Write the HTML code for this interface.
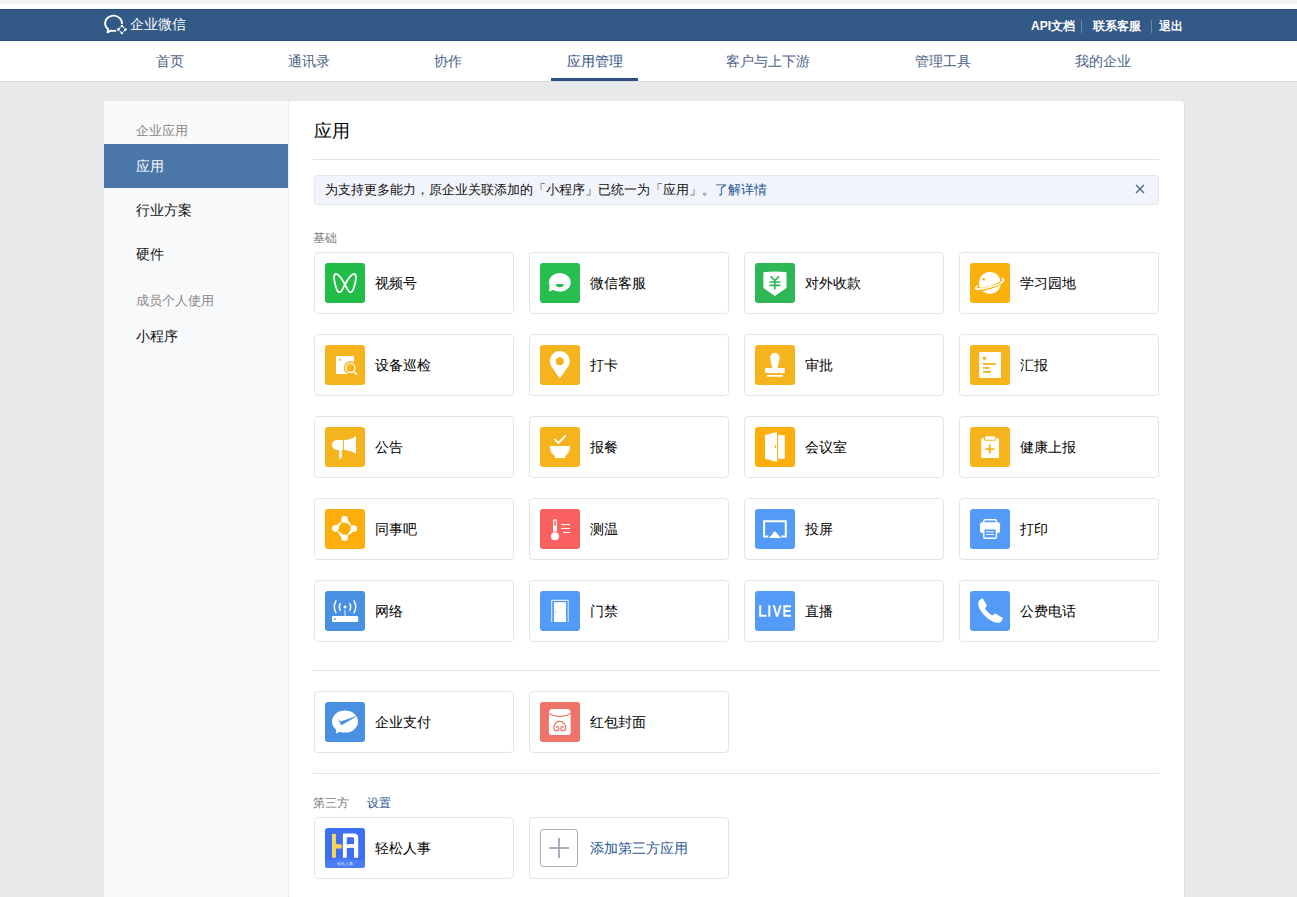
<!DOCTYPE html>
<html><head><meta charset="utf-8">
<style>
*{box-sizing:border-box;margin:0;padding:0}
html,body{width:1297px;height:897px;overflow:hidden}
body{background:#e8e9eb;font-family:"Liberation Sans",sans-serif;position:relative;color:#222}
.abs{position:absolute}
#strip{left:0;top:0;width:1297px;height:4px;background:#f1f2f4}
#strip2{left:0;top:4px;width:1297px;height:5px;background:#fff}
#hdr{left:0;top:9px;width:1297px;height:32px;background:#335986;border-top:1px solid #264c7d;border-bottom:1px solid #2c5282}
#nav{left:0;top:41px;width:1297px;height:41px;background:#fff;border-bottom:1px solid #d9dadc}
.logo{left:130px;top:15px;font-size:14px;color:#fff;line-height:18px}
.hlink{top:18px;font-size:12px;color:#fff;line-height:16px;font-weight:bold}
.hsep{top:20px;width:1px;height:13px;background:#6d87a8}
.nv{top:53px;font-size:14px;line-height:16px;color:#4b6287;white-space:nowrap}
.nv.on{color:#2c4f7f}
#uline{left:551px;top:78px;width:87px;height:3px;background:#2c5282}
#panel{left:104px;top:101px;width:1080px;height:820px;background:#fff;border-radius:3px;box-shadow:1px 0 0 rgba(0,0,0,.035)}
#side{left:104px;top:101px;width:185px;height:820px;background:#f8f9fb;border-right:1px dotted #dfe3ea;border-radius:3px 0 0 0}
.sl{left:136px;font-size:13px;color:#888;line-height:16px}
.si{left:136px;font-size:14px;color:#111;line-height:16px}
#act{left:104px;top:144px;width:184px;height:44px;background:#4a76a8}
.title{left:314px;top:121px;font-size:18px;line-height:20px;color:#000}
.hr{left:313px;width:846px;height:1px;background:#e1e4e8}
#notice{left:314px;top:175px;width:845px;height:30px;background:#f1f4fa;border:1px solid #e1e6f0;border-radius:3px}
#notice .t{position:absolute;left:10px;top:6px;font-size:13px;line-height:16px;color:#111;white-space:nowrap}
#notice a{color:#1e5494;text-decoration:none}
.lbl{font-size:12px;color:#787878;line-height:14px}
.card{position:absolute;width:200px;height:62px;border:1px solid #e3e5ea;border-radius:4px;background:#fff}
.card .ic{position:absolute;left:10px;top:10px;width:40px;height:40px;border-radius:3px;overflow:hidden}
.card .ic svg{display:block;width:40px;height:40px}
.card .addb{position:absolute;left:10px;top:11px;width:38px;height:38px;border:1px solid #a7b1c0;border-radius:3px}
.card .addb svg{position:absolute;left:-1px;top:-1px}
.card .nm{position:absolute;left:60px;top:22px;font-size:14px;line-height:16px;color:#000;white-space:nowrap}
</style></head><body>
<div class="abs" id="strip"></div>
<div class="abs" id="strip2"></div>
<div class="abs" id="hdr"></div>
<svg class="abs" style="left:100px;top:12px" width="30" height="26" viewBox="100 12 30 26"><path d="M121.9,24 A8.4,7.6 0 1 0 108.1,29.1 L107.6,32.3 L111,30.6 Q113.5,31.1 116.2,30.8" fill="none" stroke="#fff" stroke-width="1.9" stroke-linejoin="round"/><path d="M122.43,25.37 Q124.11,27.29 124.97,28.97 Q123.54,27.86 121.37,26.43 Z" fill="#fff"/><circle cx="121.90" cy="25.90" r="1.25" fill="#fff"/><path d="M126.03,30.03 Q124.11,31.71 122.43,32.57 Q123.54,31.14 124.97,28.97 Z" fill="#fff"/><circle cx="125.50" cy="29.50" r="1.25" fill="#fff"/><path d="M121.37,33.63 Q119.69,31.71 118.83,30.03 Q120.26,31.14 122.43,32.57 Z" fill="#fff"/><circle cx="121.90" cy="33.10" r="1.25" fill="#fff"/><path d="M117.77,28.97 Q119.69,27.29 121.37,26.43 Q120.26,27.86 118.83,30.03 Z" fill="#fff"/><circle cx="118.30" cy="29.50" r="1.25" fill="#fff"/></svg>
<div class="abs logo">企业微信</div>
<div class="abs hlink" style="left:1031px">API文档</div>
<div class="abs hsep" style="left:1081px"></div>
<div class="abs hlink" style="left:1093px">联系客服</div>
<div class="abs hsep" style="left:1151px"></div>
<div class="abs hlink" style="left:1159px">退出</div>

<div class="abs" id="nav"></div>
<div class="abs nv" style="left:156px">首页</div>
<div class="abs nv" style="left:288px">通讯录</div>
<div class="abs nv" style="left:434px">协作</div>
<div class="abs nv on" style="left:567px">应用管理</div>
<div class="abs nv" style="left:726px">客户与上下游</div>
<div class="abs nv" style="left:915px">管理工具</div>
<div class="abs nv" style="left:1075px">我的企业</div>
<div class="abs" id="uline"></div>

<div class="abs" id="panel"></div>
<div class="abs" id="side"></div>
<div class="abs sl" style="top:123px">企业应用</div>
<div class="abs" id="act"></div>
<div class="abs si" style="top:158px;color:#fff">应用</div>
<div class="abs si" style="top:202px">行业方案</div>
<div class="abs si" style="top:246px">硬件</div>
<div class="abs sl" style="top:293px">成员个人使用</div>
<div class="abs si" style="top:328px">小程序</div>

<div class="abs title">应用</div>
<div class="abs hr" style="top:159px"></div>
<div class="abs" id="notice"><div class="t">为支持更多能力，原企业关联添加的「小程序」已统一为「应用」。<a>了解详情</a></div><svg style="position:absolute;left:820px;top:8px" width="10" height="10" viewBox="0 0 10 10"><path d="M1,1 L9,9 M9,1 L1,9" stroke="#4d6890" stroke-width="1.4"/></svg></div>
<div class="abs lbl" style="left:313px;top:231px">基础</div>

<div class="card" style="left:314px;top:252px"><div class="ic" style="background:#21bd48"><svg viewBox="0 0 40 40"><path d="M20,21.5 C17.5,17 13,10.5 10.6,11 C8.2,11.5 8.8,19 11.8,26.5 C13.2,30.2 15.6,30.2 17.6,26.2 Z M20,21.5 C22.5,17 27,10.5 29.4,11 C31.8,11.5 31.2,19 28.2,26.5 C26.8,30.2 24.4,30.2 22.4,26.2 Z" fill="none" stroke="#fff" stroke-width="1.8" stroke-linejoin="round"/></svg></div><div class="nm">视频号</div></div>
<div class="card" style="left:529px;top:252px"><div class="ic" style="background:#26bf4f"><svg viewBox="0 0 40 40"><ellipse cx="19.8" cy="19.4" rx="10.9" ry="9.4" fill="#fff"/><path d="M9.6,23 L9,28.6 L14.5,26.5 Z" fill="#fff"/><path d="M15.8,21 H23.8 A4,3.2 0 0 1 15.8,21 Z" fill="#26bf4f"/></svg></div><div class="nm">微信客服</div></div>
<div class="card" style="left:744px;top:252px"><div class="ic" style="background:#2db757"><svg viewBox="0 0 40 40"><path d="M8.4,9.3 Q20,7.6 31.5,9.3 V25 L19.8,32.9 L8.4,25 Z" fill="#fff"/><path d="M15.6,13.4 L19.8,17.5 L24,13.4 M14.3,19 H25.4 M14.3,22.4 H25.4 M19.8,17.5 V26.6" fill="none" stroke="#2db757" stroke-width="1.7"/></svg></div><div class="nm">对外收款</div></div>
<div class="card" style="left:959px;top:252px"><div class="ic" style="background:#fbb00c"><svg viewBox="0 0 40 40"><circle cx="19.9" cy="19.9" r="10.9" fill="#fff"/><circle cx="13.7" cy="16.2" r="1.3" fill="#fbb00c"/><path d="M5.6,25 C3,27 10,27.5 20,24.5 C30,21.5 35.5,17.5 33.2,16" fill="none" stroke="#fbb00c" stroke-width="3.2"/><path d="M7.5,23.2 C3,25.8 6,27.8 20,24 C34,20 35,17 32.6,15.6" fill="none" stroke="#fff" stroke-width="1.7" stroke-linecap="round"/></svg></div><div class="nm">学习园地</div></div>
<div class="card" style="left:314px;top:334px"><div class="ic" style="background:#f5b41d"><svg viewBox="0 0 40 40"><rect x="11" y="11" width="18" height="18" rx="0.8" fill="#fff"/><circle cx="14.8" cy="14.8" r="1.1" fill="#f5b41d"/><circle cx="25.4" cy="22.9" r="6.6" fill="#f5b41d"/><circle cx="25.4" cy="22.9" r="4.5" fill="none" stroke="#fff" stroke-width="1.3"/><path d="M28.6,26.4 L31.8,29.6" stroke="#fff" stroke-width="1.4" stroke-linecap="round"/></svg></div><div class="nm">设备巡检</div></div>
<div class="card" style="left:529px;top:334px"><div class="ic" style="background:#f5b41d"><svg viewBox="0 0 40 40"><path d="M19.8,33.5 L11.2,21.2 A10,10 0 1 1 28.4,21.2 Z" fill="#fff"/><circle cx="19.8" cy="16.2" r="4" fill="#f5b41d"/></svg></div><div class="nm">打卡</div></div>
<div class="card" style="left:744px;top:334px"><div class="ic" style="background:#f5b41d"><svg viewBox="0 0 40 40"><path d="M17.3,23.2 L15.3,14.5 A4.8,5.2 0 1 1 24.5,14.5 L22.6,23.2 Z" fill="#fff"/><rect x="10" y="23" width="19.8" height="4.9" rx="0.8" fill="#fff"/><rect x="12" y="29.9" width="15.9" height="1.9" rx="0.5" fill="#fff"/></svg></div><div class="nm">审批</div></div>
<div class="card" style="left:959px;top:334px"><div class="ic" style="background:#f5b41d"><svg viewBox="0 0 40 40"><rect x="9.2" y="7" width="21.8" height="25.9" rx="1.2" fill="#fff"/><circle cx="14.4" cy="13.3" r="1.8" fill="#f5b41d"/><rect x="13" y="18.1" width="12.9" height="1.8" fill="#f5b41d"/><rect x="13" y="22" width="6.9" height="1.8" fill="#f5b41d"/><rect x="13" y="26" width="8" height="1.8" fill="#f5b41d"/></svg></div><div class="nm">汇报</div></div>
<div class="card" style="left:314px;top:416px"><div class="ic" style="background:#f5b41d"><svg viewBox="0 0 40 40"><path d="M17.9,13.1 H12 A5,4.9 0 0 0 12,22.9 H17.9 Z" fill="#fff"/><path d="M19,13.1 Q26,12.6 31,8.9 V26.8 Q26,23.3 19,22.9 Z" fill="#fff"/><path d="M14.1,22.9 H16.9 L16.7,30.6 A1.2,1.2 0 0 1 14.3,30.6 Z" fill="#fff"/></svg></div><div class="nm">公告</div></div>
<div class="card" style="left:529px;top:416px"><div class="ic" style="background:#f5b41d"><svg viewBox="0 0 40 40"><path d="M14.8,12.4 L18.4,16 L25.4,8.9" fill="none" stroke="#fff" stroke-width="1.8" stroke-linecap="round"/><path d="M9.8,19 H30.1 C30.1,24 28,27 25.1,29 V31 H15 V29 C12,27 9.8,24 9.8,19 Z" fill="#fff"/></svg></div><div class="nm">报餐</div></div>
<div class="card" style="left:744px;top:416px"><div class="ic" style="background:#fdae0b"><svg viewBox="0 0 40 40"><path d="M10,8.1 L22,5 V34.9 L10,31.8 Z" fill="#fff"/><rect x="20" y="18" width="1" height="3" fill="#fdae0b"/><rect x="23.1" y="8.1" width="6.7" height="23.7" fill="#fff"/></svg></div><div class="nm">会议室</div></div>
<div class="card" style="left:959px;top:416px"><div class="ic" style="background:#f5b41d"><svg viewBox="0 0 40 40"><rect x="11.2" y="11.2" width="17.8" height="19.8" rx="0.8" fill="#fff"/><rect x="14.2" y="8.4" width="11.6" height="5.4" rx="1.2" fill="#f5b41d"/><rect x="15.2" y="9.3" width="9.8" height="3.4" rx="0.8" fill="#fff"/><path d="M15.3,22.1 H24.4 M19.8,17.4 V26.6" stroke="#f5b41d" stroke-width="1.9"/></svg></div><div class="nm">健康上报</div></div>
<div class="card" style="left:314px;top:498px"><div class="ic" style="background:#fdae0b"><svg viewBox="0 0 40 40"><path d="M20.94,9.06 Q25.44,13.76 27.40,18.20 Q23.80,15.40 18.26,11.74 Z" fill="#fff"/><circle cx="19.60" cy="10.40" r="3.3" fill="#fff"/><path d="M30.14,20.94 Q25.44,25.44 21.00,27.40 Q23.80,23.80 27.46,18.26 Z" fill="#fff"/><circle cx="28.80" cy="19.60" r="3.3" fill="#fff"/><path d="M18.26,30.14 Q13.76,25.44 11.80,21.00 Q15.40,23.80 20.94,27.46 Z" fill="#fff"/><circle cx="19.60" cy="28.80" r="3.3" fill="#fff"/><path d="M9.06,18.26 Q13.76,13.76 18.20,11.80 Q15.40,15.40 11.74,20.94 Z" fill="#fff"/><circle cx="10.40" cy="19.60" r="3.3" fill="#fff"/></svg></div><div class="nm">同事吧</div></div>
<div class="card" style="left:529px;top:498px"><div class="ic" style="background:#fb6060"><svg viewBox="0 0 40 40"><path d="M13.1,22.5 V12 A1.95,1.95 0 0 1 17,12 V22.5 Z" fill="#fff"/><circle cx="15" cy="27.3" r="4" fill="#fff"/><rect x="14.2" y="11.3" width="1.6" height="5.4" rx="0.6" fill="#fb6060"/><rect x="21.2" y="15" width="8.9" height="1.1" fill="#fff"/><rect x="21.2" y="18.9" width="8.9" height="1.1" fill="#fff"/><rect x="23.1" y="22.9" width="7" height="1.1" fill="#fff"/></svg></div><div class="nm">测温</div></div>
<div class="card" style="left:744px;top:498px"><div class="ic" style="background:#539bf7"><svg viewBox="0 0 40 40"><path d="M13.4,27.5 H9.1 V12.2 H30.8 V27.5 H26.3" fill="none" stroke="#fff" stroke-width="2"/><path d="M14,29 L19.8,22 L26,29 Z" fill="#fff"/></svg></div><div class="nm">投屏</div></div>
<div class="card" style="left:959px;top:498px"><div class="ic" style="background:#539bf7"><svg viewBox="0 0 40 40"><rect x="13.8" y="10.7" width="12.6" height="6" rx="1" fill="none" stroke="#fff" stroke-width="1.4"/><rect x="10" y="13.2" width="20.1" height="10.8" rx="2.2" fill="#fff"/><rect x="13.8" y="19.8" width="12.6" height="9.5" rx="1" fill="#539bf7" stroke="#fff" stroke-width="1.4"/><rect x="16" y="22" width="8" height="1.6" fill="#b9d5fb"/><rect x="16" y="25" width="8" height="0.9" fill="#fff"/></svg></div><div class="nm">打印</div></div>
<div class="card" style="left:314px;top:580px"><div class="ic" style="background:#4a90e2"><svg viewBox="0 0 40 40"><circle cx="20" cy="15.9" r="1.5" fill="#fff"/><path d="M15.2,12.6 Q13.4,16 15.2,19.4 M24.8,12.6 Q26.6,16 24.8,19.4 M11,9.8 Q7.6,15.8 11,21.8 M29,9.8 Q32.4,15.8 29,21.8" fill="none" stroke="#fff" stroke-width="1.4" stroke-linecap="round"/><rect x="19.3" y="19" width="1.4" height="6" fill="#b9d5f5"/><rect x="7" y="25.1" width="26.2" height="5.9" rx="1" fill="#fff"/><rect x="9.2" y="27.3" width="1.6" height="1.6" fill="#4a90e2"/></svg></div><div class="nm">网络</div></div>
<div class="card" style="left:529px;top:580px"><div class="ic" style="background:#539bf7"><svg viewBox="0 0 40 40"><path d="M11.7,31 V9.4 H28.2 V31" fill="none" stroke="#dbe9fd" stroke-width="1.1"/><rect x="14" y="11.2" width="12" height="19.8" fill="#fff"/><circle cx="15.6" cy="21.2" r="0.6" fill="#539bf7"/></svg></div><div class="nm">门禁</div></div>
<div class="card" style="left:744px;top:580px"><div class="ic" style="background:#539bf7"><svg viewBox="0 0 40 40"><path d="M5.2,14.2 V24.7 H11.4 M14.35,14.2 V25.7 M36,15.2 H29.4 V24.7 H36 M29.4,19.9 H35.4" fill="none" stroke="#fff" stroke-width="2"/><path d="M17.7,14.2 H19.8 L22.15,22.9 L24.5,14.2 H26.6 L23.2,25.7 H21.1 Z" fill="#fff"/></svg></div><div class="nm">直播</div></div>
<div class="card" style="left:959px;top:580px"><div class="ic" style="background:#539bf7"><svg viewBox="0 0 40 40"><path d="M12.6,7.2 L16.3,13.2 C16.9,14.3 16.6,15.4 15.5,16.4 L15,17.2 C16.6,20.2 19.6,23 22.4,24.6 L23.4,23.4 C24.3,22.6 25.3,22.5 26.4,23.1 L32.8,26.9 C32.4,29.8 30.6,31.8 28.4,31.8 C20,31.8 8.2,20.4 8.2,12 C8.2,9.7 10.4,7.7 12.6,7.2 Z" fill="#fff"/></svg></div><div class="nm">公费电话</div></div>
<div class="card" style="left:314px;top:691px"><div class="ic" style="background:#4a90e2"><svg viewBox="0 0 40 40"><ellipse cx="20" cy="19.6" rx="13" ry="11" fill="#fff"/><path d="M11.4,27 L11,31.5 L16.5,28.8 Z" fill="#fff"/><path d="M12.8,17.2 L15.6,19.6 L31.4,14.0 L31.5,14.6 L16.4,23.2 Z" fill="#4a90e2"/></svg></div><div class="nm">企业支付</div></div>
<div class="card" style="left:529px;top:691px"><div class="ic" style="background:#ee7369"><svg viewBox="0 0 40 40"><path d="M8.9,11 Q8.9,7 12.5,7 H27.1 Q30.7,7 30.7,11 V30.8 Q30.7,32.9 28.6,32.9 H11 Q8.9,32.9 8.9,30.8 Z" fill="#fff"/><path d="M8.3,11.3 Q19.8,18 31.3,11.3" fill="none" stroke="#ee7369" stroke-width="1.2"/><path d="M13.9,26.2 C14.2,28.2 15.2,28.9 16.3,28.9 C17.8,28.9 18.8,27.6 18.8,26.3 C18.8,25.2 18.1,24.5 17.4,24.5 C16.7,24.5 16.3,25.1 16.6,25.7 M25.7,26.2 C25.4,28.2 24.4,28.9 23.3,28.9 C21.8,28.9 20.8,27.6 20.8,26.3 C20.8,25.2 21.5,24.5 22.2,24.5 C22.9,24.5 23.3,25.1 23,25.7 M13.9,26.2 C13.4,22.4 16.6,19.3 19.8,19.3 C23,19.3 26.2,22.4 25.7,26.2" fill="none" stroke="#ee7369" stroke-width="1.2" stroke-linecap="round"/></svg></div><div class="nm">红包封面</div></div>
<div class="card" style="left:314px;top:817px"><div class="ic" style="background:#3d6ff3"><svg viewBox="0 0 40 40"><path d="M0,33 Q20,28 40,33 V40 H0 Z" fill="#4b7cf5"/><rect x="7" y="5.9" width="3.9" height="23.9" fill="#fcd756"/><path d="M10.9,15.8 Q14,16.5 16.7,16.4 V20.6 Q14,20.2 10.9,20.6 Z" fill="#fcd756"/><path d="M17.9,29.8 V5.6 H29 Q33.2,5.6 33.2,9.8 V29.8 H29 V20 Q25,19.6 21.8,20.3 V29.8 Z M21.8,16.4 Q25.5,15.8 29,16.2 V10.5 Q29,9.2 27.5,9.2 H21.8 Z" fill="#fff" fill-rule="evenodd"/><text x="20" y="36.8" text-anchor="middle" font-family="Liberation Sans" font-size="3.6" fill="#dfe8fd">轻松人事</text></svg></div><div class="nm">轻松人事</div></div>
<div class="card" style="left:529px;top:817px"><div class="addb"><svg viewBox="0 0 38 38" width="38" height="38"><path d="M9,19 H29 M19,9 V29" stroke="#a7b1c0" stroke-width="2"/></svg></div><div class="nm" style="color:#1e5494">添加第三方应用</div></div>

<div class="abs hr" style="top:670px"></div>
<div class="abs hr" style="top:773px"></div>
<div class="abs lbl" style="left:313px;top:796px">第三方</div>
<div class="abs lbl" style="left:367px;top:796px;color:#1e5494">设置</div>
</body></html>
